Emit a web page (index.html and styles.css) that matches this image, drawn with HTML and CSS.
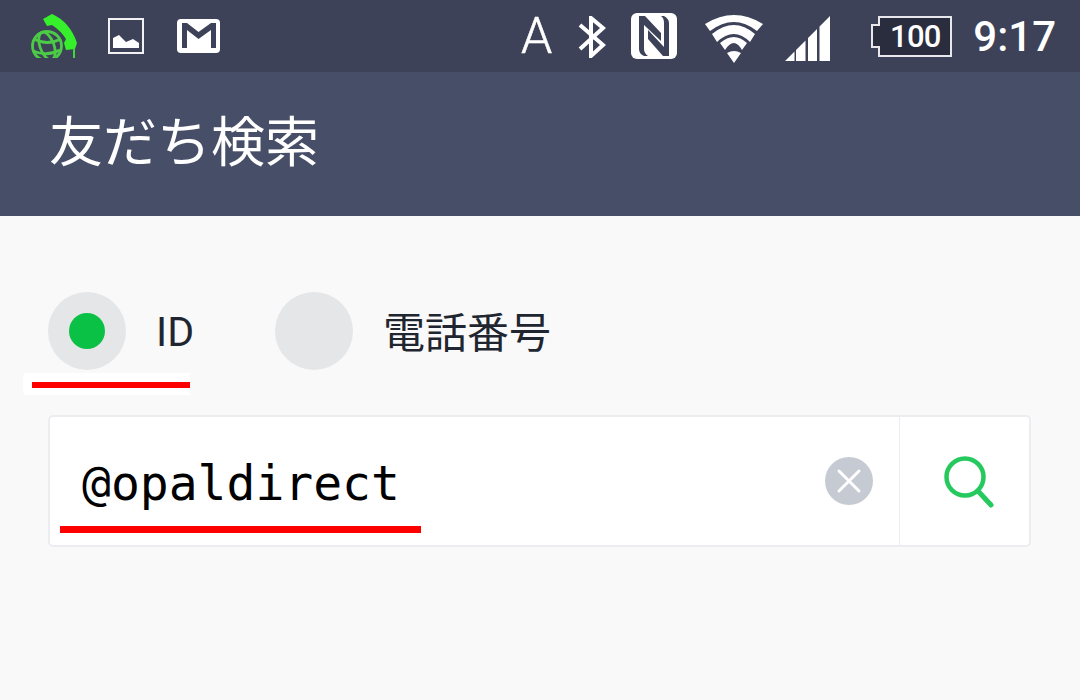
FILE: index.html
```html
<!DOCTYPE html>
<html lang="ja">
<head>
    <meta charset="UTF-8">
    <title>友だち検索</title>
    <link rel="stylesheet" href="styles.css">
</head>
<body>
    <div class="status-bar">
        <div class="status-left">
            <svg class="icon-call" width="50" height="48" viewBox="0 0 50 48">
                <clipPath id="globeClip"><rect x="0" y="0" width="50" height="45"/></clipPath>
                <g fill="none" stroke="#4ccb46" stroke-width="2.800" clip-path="url(#globeClip)">
                    <circle cx="19" cy="33" r="14.500"/>
                    <ellipse cx="19" cy="33" rx="7" ry="14.500" transform="rotate(-20 19 33)"/>
                    <path d="M6 26 Q19 33 33 26M5 38 Q19 44 32 37"/>
                </g>
                <path d="M15 6 L24 1 Q42 9 49 30 L47 36 L38 37 L36 30 L38 26 Q33 18 24 12 L19 13Z" fill="#35f02a"/>
                <path d="M46 35 V45" fill="none" stroke="#3fd83a" stroke-width="2"/>
            </svg>
            <svg class="icon-image" width="36" height="36" viewBox="0 0 36 36">
                <rect x="1" y="1" width="34" height="34" fill="none" stroke="#f2f2f5" stroke-width="2"/>
                <path d="M5 30 V20 L11 17 L18 24 L25 21 L31 25 V30Z" fill="#fff"/>
            </svg>
            <svg class="icon-mail" width="43" height="34" viewBox="0 0 43 34">
                <rect width="43" height="34" rx="4" fill="#fff"/>
                <path d="M5 4 H10 L21.500 13 L34 4 H39 V29 H34 V11 L21.500 20 L10 11 V29 H5Z" fill="#3e4258"/>
            </svg>
        </div>
        <div class="status-right">
            <span class="ime">A</span>
            <svg class="icon-bt" width="28" height="42" viewBox="0 0 28 42">
                <path d="M2 9 L25 29 L13 40 V2 L25 12 L2 33" fill="none" stroke="#fff" stroke-width="4"/>
            </svg>
            <svg class="icon-nfc" width="46" height="46" viewBox="0 0 46 46">
                <rect width="46" height="46" rx="6" fill="#fff"/>
                <path d="M8 3 H14 L30 20 V28 L13 12 V36 Q13 40 17 43 H13 Q8 41 8 36Z" fill="#3e4258"/>
                <path d="M38 43 V10 Q38 6 33 3 H30 Q33 5 33 10 V34 L17 17 V26 L32 43Z" fill="#3e4258"/>
            </svg>
            <svg class="icon-wifi" width="58" height="48" viewBox="0 0 58 48">
                <path d="M0 9 Q29 -9 58 9 L52 16 Q29 -2 5 16Z M7 19 Q29 1 50 19 L45 27 Q29 11 12 27Z M15 28 Q29 16 42 28 L37 35 Q29 21 20 35Z M22 38 Q29 34 36 38 L29 48Z" fill="#fff"/>
            </svg>
            <svg class="icon-signal" width="45" height="45" viewBox="0 0 45 45">
                <path d="M0 45 L9.500 35.500 V45Z M11 34 L20.500 24.500 V45 H11Z M23 22 L32 13 V45 H23Z M34.500 10.500 L45 0 V45 H34.500Z" fill="#fff"/>
            </svg>
            <div class="battery">
                <span class="battery-tip"></span>
                <span class="battery-body">100</span>
            </div>
            <span class="clock">9:17</span>
        </div>
    </div>

    <div class="app-bar">
        <h1>友だち検索</h1>
    </div>

    <div class="content">
        <div class="radio-row">
            <div class="radio-item radio-id">
                <span class="radio"><span class="radio-dot"></span></span>
                <span class="radio-label label-id">ID</span>
            </div>
            <div class="radio-item">
                <span class="radio"></span>
                <span class="radio-label label-tel">電話番号</span>
            </div>
        </div>

        <div class="search-box">
            <div class="search-input">
                <span class="search-text">@opaldirect</span>
                <svg class="icon-clear" width="48" height="48" viewBox="0 0 48 48">
                    <circle cx="24" cy="24" r="24" fill="#c6cad3"/>
                    <path d="M14 14 L34 34 M34 14 L14 34" stroke="#fff" stroke-width="3" stroke-linecap="round"/>
                </svg>
            </div>
            <div class="search-button">
                <svg class="icon-search" width="50" height="52" viewBox="0 0 50 52">
                    <circle cx="21" cy="21" r="18.500" fill="none" stroke="#25c95e" stroke-width="4.500"/>
                    <path d="M34 35 L47 49" stroke="#25c95e" stroke-width="5" stroke-linecap="round"/>
                </svg>
            </div>
        </div>
    </div>

    <!-- marcas rojas encima de la captura -->
    <div class="mark-patch"></div>
    <div class="mark mark-id"></div>
    <div class="mark mark-input"></div>
</body>
</html>
```

FILE: styles.css
```css
body {
    margin: 0;
    width: 1080px;
    height: 700px;
    overflow: hidden;
    position: relative;
    font-family: Roboto, "Noto Sans CJK JP", sans-serif;
    background-color: #f9f9f9;
}
.status-bar {
    height: 72px;
    background-color: #3e4258;
    display: flex;
    justify-content: space-between;
    align-items: center;
    color: white;
}
.status-left {
    display: flex;
    align-items: center;
    margin-left: 28px;
}
.icon-call {
    margin-top: 2px;
}
.icon-image {
    margin-left: 30px;
}
.icon-mail {
    margin-left: 33px;
}
.status-right {
    display: flex;
    align-items: center;
    margin-right: 24px;
}
.ime {
    font-size: 50px;
    font-weight: 300;
    line-height: 72px;
    -webkit-text-stroke: 0.5px white;
}
.icon-bt {
    margin-left: 26px;
    margin-top: 2px;
}
.icon-nfc {
    margin-left: 25px;
}
.icon-wifi {
    margin-left: 28px;
    margin-top: 6px;
}
.icon-signal {
    margin-left: 22px;
    margin-top: 4px;
}
.battery {
    display: flex;
    align-items: center;
    margin-left: 41px;
}
.battery-tip {
    width: 9px;
    height: 24px;
    margin-right: -2px;
    position: relative;
    border: 2px solid #e8e8ec;
    border-right: none;
    box-sizing: border-box;
    background-color: #2a2d3e;
}
.battery-body {
    width: 74px;
    height: 41px;
    box-sizing: border-box;
    border: 2px solid #e8e8ec;
    background-color: #2a2d3e;
    font-size: 31px;
    font-weight: 500;
    letter-spacing: -0.8px;
    line-height: 37px;
    text-align: center;
}
.clock {
    margin-left: 21px;
    font-size: 42px;
    font-weight: 500;
}
.app-bar {
    height: 144px;
    box-sizing: border-box;
    padding: 0 0 12px 49px;
    background-color: #474e68;
    display: flex;
    align-items: center;
}
.app-bar h1 {
    margin: 0;
    color: white;
    font-size: 54px;
    font-weight: 400;
    font-family: "Noto Sans CJK JP", sans-serif;
}
.content {
    padding: 76px 49px 0 48px;
}
.radio-row {
    display: flex;
}
.radio-item {
    display: flex;
    align-items: center;
    gap: 30px;
}
.radio-id {
    width: 227px;
}
.radio {
    width: 78px;
    height: 78px;
    border-radius: 50%;
    background-color: #e5e6e8;
    display: flex;
    align-items: center;
    justify-content: center;
}
.radio-dot {
    width: 36px;
    height: 36px;
    border-radius: 50%;
    background-color: #0bc145;
}
.radio-label {
    font-size: 42px;
    color: #1f2630;
}
.label-id {
    font-size: 41px;
    margin-top: 2px;
}
.label-tel {
    margin-bottom: 3px;
}
.search-box {
    margin-top: 45px;
    height: 132px;
    box-sizing: border-box;
    background-color: white;
    border: 2px solid #ecedf1;
    border-radius: 5px;
    display: flex;
}
.search-input {
    flex: 1;
    display: flex;
    align-items: center;
    justify-content: space-between;
    padding: 0 26px 0 32px;
}
.search-text {
    font-family: "DejaVu Sans Mono", monospace;
    font-size: 48px;
    color: black;
    margin-top: 4px;
}
.icon-clear {
    margin-bottom: 1px;
}
.search-button {
    width: 129px;
    border-left: 1px solid #ecedf1;
    display: flex;
    align-items: center;
    justify-content: center;
}
.icon-search {
    margin-left: 8px;
    margin-top: 1px;
}
.mark-patch {
    position: absolute;
    left: 23px;
    top: 373px;
    width: 167px;
    height: 22px;
    background-color: white;
    border-radius: 4px 0 0 4px;
}
.mark {
    position: absolute;
    background-color: #ff0000;
}
.mark-id {
    left: 32px;
    top: 382px;
    width: 158px;
    height: 6px;
}
.mark-input {
    left: 60px;
    top: 526px;
    width: 361px;
    height: 7px;
}
```
